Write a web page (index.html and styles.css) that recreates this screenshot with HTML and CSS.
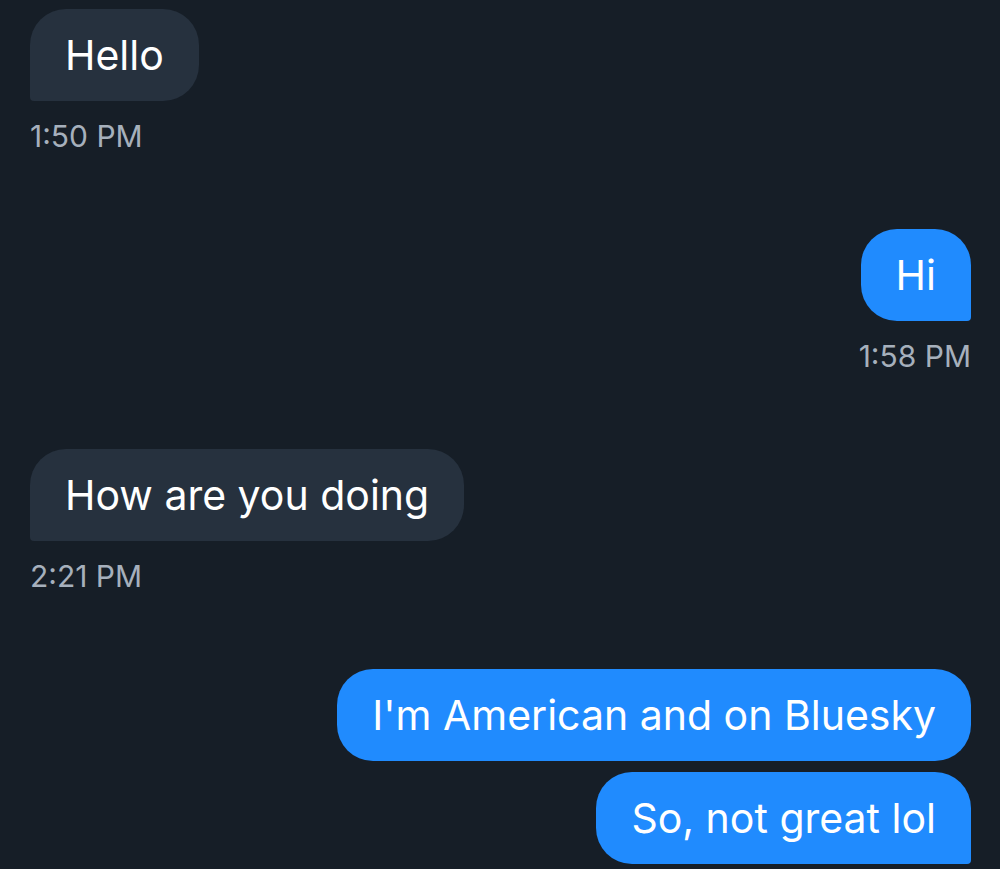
FILE: index.html
```html
<!DOCTYPE html>
<html>
<head>
<meta charset="utf-8">
<link rel="stylesheet" href="styles.css">
</head>
<body>
<div class="chat">
  <div class="group left">
    <div class="bubble other last">Hello</div>
    <div class="time">1:50 PM</div>
  </div>
  <div class="group right">
    <div class="bubble mine last">Hi</div>
    <div class="time">1:58 PM</div>
  </div>
  <div class="group left">
    <div class="bubble other last">How are you doing</div>
    <div class="time">2:21 PM</div>
  </div>
  <div class="group right">
    <div class="bubble mine">I'm American and on Bluesky</div>
    <div class="bubble mine last">So, not great lol</div>
  </div>
</div>
</body>
</html>
```

FILE: styles.css
```css
html, body {
  margin: 0;
  padding: 0;
  background: #161e27;
  height: 100%;
  overflow: hidden;
}
body {
  font-family: "Inter", "Noto Sans", sans-serif;
  color: #ffffff;
}
.chat {
  display: flex;
  flex-direction: column;
  padding: 9px 29px 0 30px;
  gap: 75px;
}
.group {
  display: flex;
  flex-direction: column;
  gap: 11px;
}
.group.left { align-items: flex-start; }
.group.right { align-items: flex-end; }
.bubble {
  font-size: 41px;
  line-height: 46px;
  padding: 23px 35px 23px 35px;
  border-radius: 36px;
}
.bubble.other { background: #26313e; }
.bubble.mine { background: #208bfe; }
.bubble.other.last { border-bottom-left-radius: 4px; }
.bubble.mine.last { border-bottom-right-radius: 4px; }
.time {
  font-size: 30px;
  line-height: 36px;
  color: #a6b0bc;
  margin-top: 6px;
}
```
